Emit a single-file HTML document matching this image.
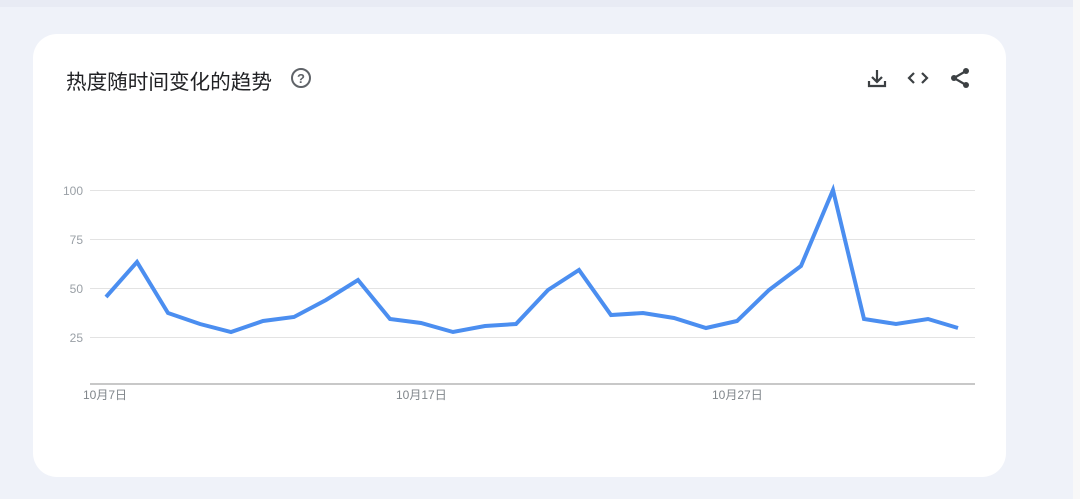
<!DOCTYPE html>
<html><head><meta charset="utf-8"><style>
body{margin:0;width:1080px;height:499px;background:#eff2f9;position:relative;overflow:hidden;font-family:"Liberation Sans","Noto Sans CJK SC",sans-serif}
.top{position:absolute;left:0;top:0;width:1073px;height:7px;background:#e8ebf4}
.sb{position:absolute;left:1073px;top:0;width:7px;height:499px;background:#f8f8f8}
.th{position:absolute;left:1076px;top:0;width:3px;height:218px;background:#8a8a8a;border-radius:2px}
.card{position:absolute;left:33px;top:34px;width:973px;height:443px;background:#fff;border-radius:24px}
.title{position:absolute;left:66px;top:65px;font-size:20.6px;color:#202124;letter-spacing:0}
</style></head><body>
<div class="top"></div><div class="sb"><div class="th"></div></div>
<div class="card"></div>
<div class="title">热度随时间变化的趋势</div>
<svg width="1080" height="499" style="position:absolute;left:0;top:0">
<circle cx="301" cy="78" r="9" fill="none" stroke="#5f6368" stroke-width="2"/>
<text x="301" y="83" font-size="13" font-weight="bold" text-anchor="middle" fill="#5f6368" font-family="Liberation Sans">?</text>
<g stroke="#3c4043" stroke-width="2.2" fill="none">
<path d="M877 70v11M872 77l5 5 5-5M869 81v5h16v-5"/>
<path d="M914 73l-5 5 5 5M922 73l5 5-5 5"/>
<path d="M966 71l-12 7 12 7"/>
</g>
<g fill="#3c4043"><circle cx="966" cy="71" r="3"/><circle cx="954" cy="78" r="3"/><circle cx="966" cy="85" r="3"/></g>
<g stroke="#e3e3e3" stroke-width="1"><line x1="90" y1="190.5" x2="975" y2="190.5"/><line x1="90" y1="239.5" x2="975" y2="239.5"/><line x1="90" y1="288.5" x2="975" y2="288.5"/><line x1="90" y1="337.5" x2="975" y2="337.5"/></g>
<line x1="90" y1="384" x2="975" y2="384" stroke="#c8c8c8" stroke-width="2"/>
<g font-size="12" fill="#9aa0a6" text-anchor="end"><text x="83" y="195">100</text><text x="83" y="244">75</text><text x="83" y="293">50</text><text x="83" y="342">25</text></g>
<g font-size="12" fill="#80868b" font-family="Liberation Sans,Noto Sans CJK SC,sans-serif"><text x="83" y="399">10月7日</text><text x="396" y="399">10月17日</text><text x="712" y="399">10月27日</text></g>
<polyline fill="none" stroke="#4b8ef0" stroke-width="4" stroke-linejoin="miter" points="106,297 137,262 168,313 200,324 231,332 263,321 294,317 326,300 358,280 390,319 421,323 453,332 485,326 516,324 548,290 579,270 611,315 643,313 674,318 706,328 737,321 769,290 801,266 833,190 864,319 896,324 928,319 958,328"/>
</svg>
</body></html>
